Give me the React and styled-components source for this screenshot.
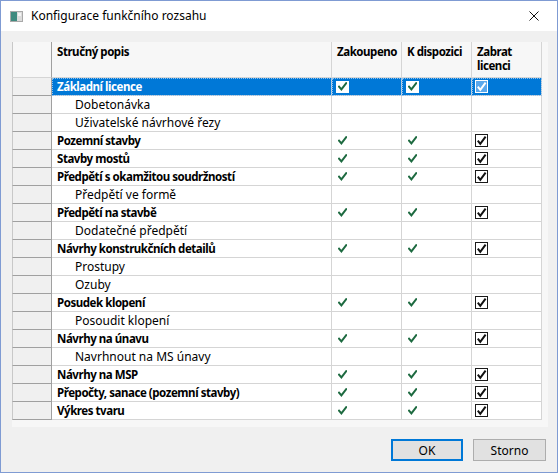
import React from 'react'
import styled, { createGlobalStyle, css } from 'styled-components'

const GlobalStyle = createGlobalStyle`
  html, body {
    margin: 0;
    padding: 0;
    background: #ffffff;
  }
  * {
    box-sizing: border-box;
  }
`

const FONT = `'Noto Sans', 'Liberation Sans', sans-serif`

// Noto Sans Bold runs wider than the Segoe UI bold of the dialog, so tighten it
const boldText = css`
  font-weight: 700;
  font-size: 11.5px;
  letter-spacing: -0.45px;
`

const Window = styled.div`
  width: 558px;
  height: 473px;
  border: 1px solid #7f9bd3;
  display: flex;
  flex-direction: column;
  font-family: ${FONT};
  font-size: 12px;
  color: #000;
  background: #f0f0f0;
`

const TitleBar = styled.div`
  height: 30px;
  background: #ffffff;
  display: flex;
  align-items: center;
  padding: 0 0 0 9px;
`

const Title = styled.div`
  flex: 1;
  margin-left: 8px;
  font-size: 12px;
  padding-bottom: 1px;
`

const CloseButton = styled.div`
  width: 46px;
  height: 30px;
  display: flex;
  align-items: center;
  justify-content: center;
`

const Body = styled.div`
  flex: 1;
  display: flex;
  flex-direction: column;
  padding: 11px 9px 0 11px;
`

const GridBox = styled.div`
  height: 385px;
  background: #f7f7f7;
`

const Row = styled.div`
  display: grid;
  grid-template-columns: 40px 280px 70px 70px 70px;
  height: ${p => (p.$header ? '36px' : '18px')};
`

const RowHead = styled.div`
  background: ${p => (p.$header ? '#f7f7f7' : '#f0f0f0')};
  border-left: 1px solid #c8c8c8;
  border-right: 1px solid #a0a0a0;
  border-bottom: 1px solid ${p => (p.$header ? '#d5d5d5' : '#a0a0a0')};
`

const HeadCell = styled.div`
  background: #f7f7f7;
  border-right: 1px solid #d5d5d5;
  border-bottom: 1px solid #d5d5d5;
  ${boldText}
  line-height: 14px;
  padding: 3px 0 0 5px;
  white-space: nowrap;
`

const Cell = styled.div`
  background: ${p => (p.$selected ? '#0078d7' : '#ffffff')};
  color: ${p => (p.$selected ? '#ffffff' : '#000000')};
  border-right: 1px solid #d5d5d5;
  border-bottom: 1px solid #d5d5d5;
  display: flex;
  align-items: center;
  padding-left: ${p => (p.$indent ? '23px' : '5px')};
  line-height: 17px;
  white-space: nowrap;
  ${p => p.$bold && boldText}
  ${p => p.$selected && 'outline: 1px dotted #8fc1ee; outline-offset: -1px;'}
  ${p => p.$check && 'padding-left: 4px;'}
  ${p => p.$box && 'padding-left: 3px;'}
`

const CheckHolder = styled.span`
  width: 13px;
  height: 12px;
  display: inline-flex;
  align-items: center;
  justify-content: center;
  background: ${p => (p.$selected ? '#ffffff' : 'transparent')};
`

const Box = styled.span`
  width: 13px;
  height: 13px;
  border: 1px solid ${p => (p.$selected ? '#ffffff' : '#1a1a1a')};
  background: ${p => (p.$selected ? '#5aa8ec' : '#ffffff')};
  display: inline-flex;
  align-items: center;
  justify-content: center;
`

const Footer = styled.div`
  display: flex;
  justify-content: flex-end;
  gap: 10px;
  padding: 12px 2px 0 0;
`

const Button = styled.button`
  width: ${p => (p.$wide ? '73px' : '72px')};
  height: 22px;
  background: #e1e1e1;
  border: ${p => (p.$default ? '2px solid #0078d7' : '1px solid #adadad')};
  font-family: ${FONT};
  font-size: 12px;
  color: #000;
  padding: 0;
`

const rows = [
  { label: 'Základní licence', main: true, selected: true },
  { label: 'Dobetonávka' },
  { label: 'Uživatelské návrhové řezy' },
  { label: 'Pozemní stavby', main: true },
  { label: 'Stavby mostů', main: true },
  { label: 'Předpětí s okamžitou soudržností', main: true },
  { label: 'Předpětí ve formě' },
  { label: 'Předpětí na stavbě', main: true },
  { label: 'Dodatečné předpětí' },
  { label: 'Návrhy konstrukčních detailů', main: true },
  { label: 'Prostupy' },
  { label: 'Ozuby' },
  { label: 'Posudek klopení', main: true },
  { label: 'Posoudit klopení' },
  { label: 'Návrhy na únavu', main: true },
  { label: 'Navrhnout na MS únavy' },
  { label: 'Návrhy na MSP', main: true },
  { label: 'Přepočty, sanace (pozemní stavby)', main: true },
  { label: 'Výkres tvaru', main: true },
]

function GreenCheck() {
  return (
    <svg width="9" height="9" viewBox="0 0 9 9">
      <path d="M1 4.6 L3.4 7.4 L8.2 1.2" fill="none" stroke="#1d6a40" strokeWidth="2" strokeLinecap="square" />
    </svg>
  )
}

function BoxCheck({ color }) {
  return (
    <svg width="11" height="11" viewBox="0 0 11 11">
      <path d="M1.8 5.6 L4.3 8.8 L9.6 1.6" fill="none" stroke={color} strokeWidth="2" />
    </svg>
  )
}

function AppIcon() {
  return (
    <svg width="13" height="11" viewBox="0 0 13 11">
      <rect x="0.5" y="0.5" width="12" height="10" fill="#dcdcdc" stroke="#a9a9a9" />
      <rect x="1" y="1" width="6" height="9" fill="#3f8a7f" />
      <rect x="8" y="2" width="3" height="3" fill="#f4f4f4" />
    </svg>
  )
}

function CloseIcon() {
  return (
    <svg width="10" height="10" viewBox="0 0 10 10">
      <path d="M0.5 0.5 L9.5 9.5 M9.5 0.5 L0.5 9.5" stroke="#111" strokeWidth="1" />
    </svg>
  )
}

export default function App() {
  return (
    <>
      <GlobalStyle />
      <Window>
        <TitleBar>
          <AppIcon />
          <Title>Konfigurace funkčního rozsahu</Title>
          <CloseButton><CloseIcon /></CloseButton>
        </TitleBar>
        <Body>
          <GridBox>
            <Row $header>
              <RowHead $header />
              <HeadCell>Stručný popis</HeadCell>
              <HeadCell>Zakoupeno</HeadCell>
              <HeadCell>K dispozici</HeadCell>
              <HeadCell>Zabrat<br />licenci</HeadCell>
            </Row>
            {rows.map(r => (
              <Row key={r.label}>
                <RowHead />
                <Cell $selected={r.selected} $bold={r.main} $indent={!r.main}>{r.label}</Cell>
                <Cell $selected={r.selected} $check>
                  {r.main && <CheckHolder $selected={r.selected}><GreenCheck /></CheckHolder>}
                </Cell>
                <Cell $selected={r.selected} $check>
                  {r.main && <CheckHolder $selected={r.selected}><GreenCheck /></CheckHolder>}
                </Cell>
                <Cell $selected={r.selected} $box>
                  {r.main && (
                    <Box $selected={r.selected}>
                      <BoxCheck color={r.selected ? '#ffffff' : '#111111'} />
                    </Box>
                  )}
                </Cell>
              </Row>
            ))}
          </GridBox>
          <Footer>
            <Button $default>OK</Button>
            <Button $wide>Storno</Button>
          </Footer>
        </Body>
      </Window>
    </>
  )
}
